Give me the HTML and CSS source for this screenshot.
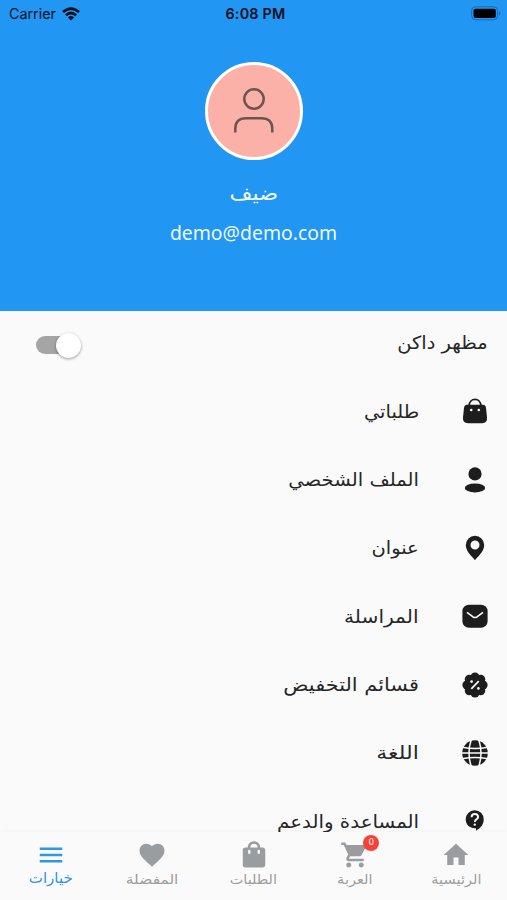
FILE: index.html
```
<!DOCTYPE html>
<html lang="ar" dir="rtl">
<head>
<meta charset="utf-8">
<title>خيارات</title>
<link rel="stylesheet" href="styles.css">
</head>
<body>
<div class="screen">
  <header class="hero">
    <div class="status" dir="ltr">
      <div class="carrier"><span>Carrier</span>
        <svg width="18" height="14" viewBox="0 0 18 14" fill="none" stroke="#04101c" stroke-width="2.7"><path d="M1 5.1Q9-2 17 5.1M3.9 8.2Q9 3.8 14.1 8.2"/><path d="M9 13.6 5.9 10.4Q9 7.7 12.1 10.4Z" fill="#04101c" stroke="none"/></svg>
      </div>
      <div class="clock">6:08 PM</div>
      <svg class="battery" width="31" height="15" viewBox="0 0 31 15"><rect x=".6" y=".8" width="26" height="13" rx="4" fill="none" stroke="#176cb1"/><rect x="2.5" y="2.8" width="22.3" height="9.2" rx="2" fill="#000"/><path d="M28.3 5.2q2.4 2.2 0 4.4z" fill="#176cb1"/></svg>
    </div>
    <div class="avatar">
      <svg width="42" height="46" viewBox="0 0 42 46" fill="none" stroke="#695651" stroke-width="2.5"><circle cx="21" cy="11" r="9.7"/><path d="M2.3 44.5V41Q2.3 30.3 13 30.3H28.5Q39.3 30.3 39.3 41V44.5"/></svg>
    </div>
    <div class="name"><span class="t wide-11">ضيف</span></div>
    <div class="email" dir="ltr">demo@demo.com</div>
  </header>
  <main class="list">
    <div class="row theme"><span class="t wide-8">مظهر داكن</span><span class="switch"><i></i></span></div>
    <div class="row"><svg class="ico" viewBox="0 0 26 26"><path d="M7 8C7.300-.8 18.700-.8 19 8" fill="none" stroke="#1d1d1e" stroke-width="1.800"/><path d="M5 6.700h16q2.500 0 3 3l1 9.800q.5 5.700-5 5.700H6Q.5 25.200 1 19.500L2 9.700Q2.500 6.700 5 6.700z"/><circle cx="9.200" cy="12" r="1.300" fill="#fafafa"/><circle cx="16.800" cy="12" r="1.300" fill="#fafafa"/></svg><span class="t wide-8">طلباتي</span></div>
    <div class="row"><svg class="ico" viewBox="0 0 26 26"><circle cx="13" cy="6.900" r="6.600"/><ellipse cx="13" cy="20.900" rx="10.200" ry="4.500"/></svg><span class="t wide-9">الملف الشخصي</span></div>
    <div class="row"><svg class="ico" viewBox="0 0 26 26"><path fill-rule="evenodd" d="M13 .8a9.200 9.200 0 0 1 9.200 9.200C22.200 17 15.500 21.500 13 25.300 10.500 21.500 3.800 17 3.800 10A9.200 9.200 0 0 1 13 .8zM13 5.500a4.500 4.500 0 1 0 0 9 4.500 4.500 0 0 0 0-9z"/></svg><span class="t wide-8">عنوان</span></div>
    <div class="row"><svg class="ico" viewBox="0 0 26 26"><rect x=".4" y="1.700" width="25.200" height="23" rx="6.500"/><path d="M5 9.300 11 13.900Q13 15.100 15 13.900L21 9.300" fill="none" stroke="#fafafa" stroke-width="1.700"/></svg><span class="t wide-12">المراسلة</span></div>
    <div class="row"><svg class="ico" viewBox="0 0 26 26"><circle cx="13" cy="13" r="10.800"/><g><circle cx="13" cy="4.900" r="4.500"/><circle cx="18.730" cy="7.270" r="4.500"/><circle cx="21.100" cy="13" r="4.500"/><circle cx="18.730" cy="18.730" r="4.500"/><circle cx="13" cy="21.100" r="4.500"/><circle cx="7.270" cy="18.730" r="4.500"/><circle cx="4.900" cy="13" r="4.500"/><circle cx="7.270" cy="7.270" r="4.500"/></g><path d="m9.300 16.800 7.400-7.600" stroke="#fafafa" stroke-width="1.700"/><circle cx="9.600" cy="9.600" r="1.300" fill="#fafafa"/><circle cx="16.400" cy="16.400" r="1.300" fill="#fafafa"/></svg><span class="t wide-16">قسائم التخفيض</span></div>
    <div class="row"><svg class="ico" viewBox="0 0 26 26"><circle cx="13" cy="13" r="12.800"/><g fill="none" stroke="#fafafa" stroke-width="1.500"><path d="M9.500-1Q4.500 13 9.500 27M16.500-1Q21.500 13 16.500 27"/><path d="M0 7.300Q13 9.700 26 7.300M0 13H26M0 18.700Q13 16.300 26 18.700"/></g></svg><span class="t wide-22">اللغة</span></div>
    <div class="row"><svg class="ico" viewBox="0 0 26 26"><path d="M12.500 2.200a9 9 0 0 1 9.200 9.300c0 5-3 8.300-7.700 11.200V20.200C8 20.700 3.700 16.700 3.700 11.200A9 9 0 0 1 12.500 2.200z"/><path d="M9.600 9.200c0-4.300 6.500-4 6.500-.3 0 2.500-3.300 2.300-3.300 5" fill="none" stroke="#fafafa" stroke-width="1.900"/><circle cx="12.800" cy="16.600" r="1.200" fill="#fafafa"/></svg><span class="t wide-10">المساعدة والدعم</span></div>
  </main>
  <nav class="tabs">
    <div class="tab"><svg viewBox="0 0 24 24"><path d="M10 20v-6h4v6h5v-8h3L12 3 2 12h3v8z"/></svg><span class="t wide-12">الرئيسية</span></div>
    <div class="tab"><svg viewBox="0 0 24 24"><path d="M7 18c-1.100 0-1.990.9-1.990 2S5.900 22 7 22s2-.9 2-2-.9-2-2-2zM1 2v2h2l3.600 7.590-1.350 2.450c-.16.28-.25.610-.25.960 0 1.100.9 2 2 2h12v-2H7.420c-.14 0-.25-.11-.25-.25l.03-.12.9-1.630h7.450c.75 0 1.410-.41 1.750-1.030l3.580-6.490A1 1 0 0 0 20 4H5.210l-.94-2H1zm16 16c-1.100 0-1.990.9-1.990 2s.89 2 1.990 2 2-.9 2-2-.9-2-2-2z"/></svg><span class="badge">0</span><span class="t wide-12">العربة</span></div>
    <div class="tab"><svg viewBox="0 0 24 24"><path fill-rule="evenodd" d="M19 6h-2c0-2.760-2.240-5-5-5S7 3.240 7 6H5c-1.100 0-2 .9-2 2v12c0 1.100.9 2 2 2h14c1.100 0 2-.9 2-2V8c0-1.100-.9-2-2-2zM12 3c1.660 0 3 1.340 3 3H9c0-1.660 1.340-3 3-3zM7.300 8h1.800v3H7.300zM14.900 8h1.800v3h-1.800z"/></svg><span class="t wide-11">الطلبات</span></div>
    <div class="tab"><svg viewBox="0 0 24 24"><path d="m12 21.350-1.450-1.320C5.400 15.360 2 12.280 2 8.500 2 5.420 4.420 3 7.500 3c1.740 0 3.410.81 4.500 2.090C13.090 3.810 14.760 3 16.500 3 19.580 3 22 5.420 22 8.500c0 3.780-3.400 6.860-8.550 11.540z"/></svg><span class="t wide-19">المفضلة</span></div>
    <div class="tab active"><svg viewBox="0 0 24 24"><path d="M3 18h18v-2H3zm0-5h18v-2H3zm0-7v2h18V6z"/></svg><span class="t">خيارات</span></div>
  </nav>
</div>
</body>
</html>
```
FILE: styles.css
```
* { box-sizing: border-box; }
body { margin: 0; font-family: "DejaVu Sans", sans-serif; background: #fafafa; }
.screen { width: 507px; height: 900px; display: flex; flex-direction: column; overflow: hidden; }
.hero { height: 311px; flex: none; background: #2196f3; display: flex; flex-direction: column; align-items: center; color: #eef9ff; }
.status { width: 100%; height: 27px; display: grid; grid-template-columns: 1fr auto 1fr; align-items: center; padding: 0 5px 0 9px; color: #04101c; font: 14.3px Inter, sans-serif; }
.carrier { display: flex; gap: 6px; align-items: center; }
.clock { font-weight: 600; letter-spacing: .25px; }
.battery { justify-self: end; }
.avatar { width: 98px; height: 98px; margin-top: 35px; border: 3px solid #fff; border-radius: 50%; background: #fcb1a8; display: grid; place-items: center; }
.name { height: 40px; margin-top: 13px; line-height: 40px; font-size: 20px; }
.email { height: 40px; font: 19.4px/40px "Noto Sans", sans-serif; }
.t { display: inline-block; white-space: nowrap; }
.wide-8 { transform: scaleX(1.08); }
.wide-9 { transform: scaleX(1.09); }
.wide-10 { transform: scaleX(1.10); }
.wide-11 { transform: scaleX(1.11); }
.wide-12 { transform: scaleX(1.12); }
.wide-16 { transform: scaleX(1.16); }
.wide-19 { transform: scaleX(1.19); }
.wide-22 { transform: scaleX(1.22); }
.list { flex: 1; min-height: 0; overflow: hidden; padding: 0 19px; color: #262627; font-size: 18px; }
.row { height: 68.35px; display: flex; align-items: center; gap: 43px; }
.row .t { transform-origin: right; }
.ico { width: 26px; height: 26px; flex: none; fill: #1d1d1e; }
.theme { justify-content: space-between; height: 66px; }
.theme .t { margin-bottom: 3px; }
.switch { width: 45px; height: 28px; margin: 2px 0 0 17px; display: flex; align-items: center; position: relative; }
.switch::before { content: ""; position: absolute; left: 0; top: 5px; width: 38px; height: 18px; border-radius: 9px; background: #a5a5a5; }
.switch i { position: relative; width: 25px; height: 25px; border-radius: 50%; background: #fff; box-shadow: 0 1px 3px #0006; }
.tabs { height: 68px; flex: none; display: grid; grid-template-columns: repeat(5, 101.4px); background: #fafafa; box-shadow: 0 -2px 5px #00000006; color: #9e9e9e; font-size: 13px; }
.tab { display: flex; flex-direction: column; align-items: center; padding-top: 8px; position: relative; }
.tab svg { width: 30px; height: 30px; fill: #999da0; flex: none; }
.tab .t { line-height: 20px; }
.badge { position: absolute; left: 59px; top: 3px; width: 16px; height: 16px; border-radius: 50%; background: #f44336; color: #fff; font: 9px/14px "Noto Sans", sans-serif; text-align: center; }
.active { color: #2f96e8; font-size: 15px; }
.active .t { margin-top: -2px; }
.active svg { fill: #2f96e8; }
```
